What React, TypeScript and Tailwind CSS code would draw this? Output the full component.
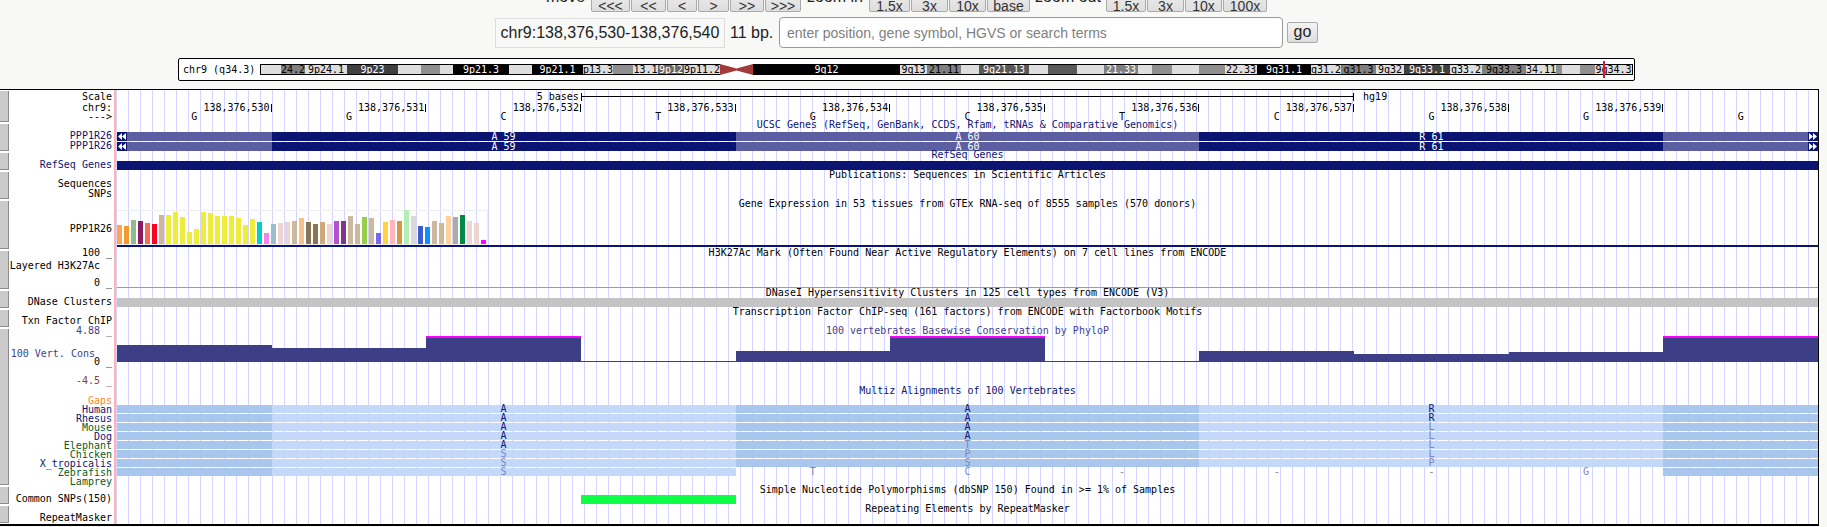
import type { ReactNode } from "react";

const navBtn = "h-[30px] border border-[#aaaaaa] rounded-[2px] bg-gradient-to-b from-[#f4f4f4] to-[#dedede] text-[14px] leading-[46px] text-[#333333] text-center overflow-hidden";

const moveBtns = [
  { t: "<<<", c: "w-[39px]" },
  { t: "<<", c: "w-[35px]" },
  { t: "<", c: "w-[30px]" },
  { t: ">", c: "w-[31px]" },
  { t: ">>", c: "w-[34px]" },
  { t: ">>>", c: "w-[36px]" },
];
const zoomInBtns = [
  { t: "1.5x", c: "w-[41px]" },
  { t: "3x", c: "w-[37px]" },
  { t: "10x", c: "w-[37px]" },
  { t: "base", c: "w-[43px]" },
];
const zoomOutBtns = [
  { t: "1.5x", c: "w-[40px]" },
  { t: "3x", c: "w-[37px]" },
  { t: "10x", c: "w-[37px]" },
  { t: "100x", c: "w-[44px]" },
];

const LIGHT = "bg-[#dedede] text-black";
const bands = [
  { w: 20, c: LIGHT, t: "" },
  { w: 24, c: "bg-[#808080] text-black", t: "24.2" },
  { w: 42, c: LIGHT, t: "9p24.1" },
  { w: 51, c: "bg-[#404040] text-white", t: "9p23" },
  { w: 23, c: LIGHT, t: "" },
  { w: 19, c: "bg-[#8f8f8f]", t: "" },
  { w: 13, c: LIGHT, t: "" },
  { w: 56, c: "bg-black text-white", t: "9p21.3" },
  { w: 23, c: LIGHT, t: "" },
  { w: 51, c: "bg-black text-white", t: "9p21.1" },
  { w: 30, c: LIGHT, t: "p13.3" },
  { w: 20, c: "bg-[#8f8f8f]", t: "" },
  { w: 25, c: LIGHT, t: "13.1" },
  { w: 26, c: "bg-[#666666] text-white", t: "9p12" },
  { w: 36, c: LIGHT, t: "9p11.2" },
  { w: 33, c: "cen", t: "" },
  { w: 147, c: "bg-black text-white", t: "9q12" },
  { w: 27, c: LIGHT, t: "9q13" },
  { w: 34, c: "bg-[#808080] text-black", t: "21.11" },
  { w: 18, c: LIGHT, t: "" },
  { w: 50, c: "bg-[#595959] text-white", t: "9q21.13" },
  { w: 19, c: LIGHT, t: "" },
  { w: 29, c: "bg-[#595959]", t: "" },
  { w: 27, c: LIGHT, t: "" },
  { w: 34, c: "bg-[#808080] text-white", t: "21.33" },
  { w: 14, c: LIGHT, t: "" },
  { w: 20, c: "bg-[#8f8f8f]", t: "" },
  { w: 27, c: LIGHT, t: "" },
  { w: 26, c: "bg-[#8f8f8f]", t: "" },
  { w: 32, c: LIGHT, t: "22.33" },
  { w: 54, c: "bg-black text-white", t: "9q31.1" },
  { w: 30, c: LIGHT, t: "q31.2" },
  { w: 35, c: "bg-[#808080] text-black", t: "q31.3" },
  { w: 28, c: LIGHT, t: "9q32" },
  { w: 46, c: "bg-[#404040] text-white", t: "9q33.1" },
  { w: 32, c: LIGHT, t: "q33.2" },
  { w: 44, c: "bg-[#808080] text-black", t: "9q33.3" },
  { w: 30, c: LIGHT, t: "34.11" },
  { w: 6, c: "bg-[#8f8f8f]", t: "" },
  { w: 18, c: LIGHT, t: "" },
  { w: 15, c: "bg-[#8f8f8f]", t: "" },
  { w: 37, c: LIGHT, t: "9q34.3" },
];

const gtex = [
  ["bg-[#ffa54f]", 19], ["bg-[#f39a2e]", 18], ["bg-[#8fbc8f]", 24], ["bg-[#8b1c62]", 23], ["bg-[#f56c57]", 21],
  ["bg-[#ff0020]", 20], ["bg-[#cdb79e]", 29], ["bg-[#f0ec3c]", 29], ["bg-[#f0ec3c]", 32], ["bg-[#f0ec3c]", 27],
  ["bg-[#f0ec3c]", 12], ["bg-[#f0ec3c]", 15], ["bg-[#f0ec3c]", 32], ["bg-[#f0ec3c]", 31], ["bg-[#f0ec3c]", 28],
  ["bg-[#f0ec3c]", 28], ["bg-[#f0ec3c]", 28], ["bg-[#f0ec3c]", 26], ["bg-[#f0ec3c]", 19], ["bg-[#f0ec3c]", 25],
  ["bg-[#00cdcd]", 22], ["bg-[#f584ea]", 11], ["bg-[#9ac0cd]", 20], ["bg-[#eed5d2]", 21], ["bg-[#eed5d2]", 22],
  ["bg-[#cdb79e]", 23], ["bg-[#f4c28f]", 26], ["bg-[#8b7355]", 22], ["bg-[#8b7355]", 20], ["bg-[#cdaa7d]", 22],
  ["bg-[#eed5d2]", 20], ["bg-[#b452cd]", 23], ["bg-[#7a378b]", 23], ["bg-[#cdb79e]", 28], ["bg-[#cdb79e]", 20],
  ["bg-[#96cd4a]", 27], ["bg-[#cdb79e]", 26], ["bg-[#7a67ee]", 11], ["bg-[#ffd53f]", 22], ["bg-[#ffb6c1]", 24],
  ["bg-[#d29c3c]", 23], ["bg-[#b4eeb4]", 34], ["bg-[#d9d9d9]", 28], ["bg-[#3a5fcd]", 18], ["bg-[#0f8fff]", 17],
  ["bg-[#cdb79e]", 23], ["bg-[#cdb79e]", 21], ["bg-[#fed09a]", 28], ["bg-[#ababab]", 27], ["bg-[#008b45]", 29],
  ["bg-[#eed5d2]", 23], ["bg-[#eed5d2]", 21], ["bg-[#ff00ff]", 4],
] as const;

const coords = ["530", "531", "532", "533", "534", "535", "536", "537", "538", "539"];
const dna = ["G", "G", "C", "T", "G", "C", "T", "C", "G", "G", "G"];

const cons = [
  "h-[17px]", "h-[14px]", "h-[26px] border-t-2", "h-px", "h-[11px]", "h-[26px] border-t-2",
  "h-px", "h-[11px]", "h-[8px]", "h-[10px]", "h-[26px] border-t-2",
];

const species = [
  { n: "Human", c: "text-[#0c1472]" },
  { n: "Rhesus", c: "text-[#0c1472]" },
  { n: "Mouse", c: "text-[#0b5a1e]" },
  { n: "Dog", c: "text-[#0c1472]" },
  { n: "Elephant", c: "text-[#0b5a1e]" },
  { n: "Chicken", c: "text-[#0b5a1e]" },
  { n: "X_tropicalis", c: "text-[#0c1472]" },
  { n: "Zebrafish", c: "text-[#0b5a1e]" },
  { n: "Lamprey", c: "text-[#0b5a1e]" },
];

// letters per alignment row, index 2, 5 and 8 are the codon centres
const NAVY = "text-[#0c1472]";
const GREY = "text-[#7d84b8]";
const aliRows = [
  [["A", NAVY], ["A", NAVY], ["R", NAVY]],
  [["A", NAVY], ["A", NAVY], ["R", NAVY]],
  [["A", NAVY], ["A", NAVY], ["L", GREY]],
  [["A", NAVY], ["A", NAVY], ["L", GREY]],
  [["A", NAVY], ["T", GREY], ["L", GREY]],
  [["S", GREY], ["P", GREY], ["L", GREY]],
  [["S", GREY], ["S", GREY], ["P", GREY]],
];
const DARK_COL = "bg-[#a9c7ec]";
const LIGHT_COL = "bg-[#c4d9fa]";
const aliCols = [DARK_COL, LIGHT_COL, LIGHT_COL, LIGHT_COL, DARK_COL, DARK_COL, DARK_COL, LIGHT_COL, LIGHT_COL, LIGHT_COL, DARK_COL];
const lastRow = ["", "", "S", "", "T", "C", "-", "-", "-", "G", ""];

function Row({ h, label, children }: { h: string; label: ReactNode; children: ReactNode }) {
  return (
    <div className={`flex ${h}`}>
      <div className="w-[9px] my-px bg-[#cbcbcb] border-r border-b border-[#8c8c8c] shrink-0" />
      <div className="w-[105px] shrink-0 flex flex-col items-end pr-[2px] whitespace-pre">{label}</div>
      <div className="w-[2px] bg-[#ffb4b4] shrink-0" />
      <div className="flex-1 pl-px bg-[repeating-linear-gradient(90deg,#d4d4ff_0,#d4d4ff_1px,transparent_1px,transparent_12px)]">
        {children}
      </div>
    </div>
  );
}

function Arrows({ right }: { right?: boolean }) {
  return (
    <span className="w-[10px] h-[9px] bg-[#0c1472] flex items-center justify-center">
      <svg width="8" height="7" viewBox="0 0 8 7" className={right ? "rotate-180" : ""}>
        <path d="M0 3.5 4 0v7zM4 3.5 8 0v7z" fill="#fff" />
      </svg>
    </span>
  );
}

function GeneBar({ arrows, label }: { arrows?: boolean; label: string[] }) {
  return (
    <div className="grid grid-cols-11 h-[9px] leading-[9px] text-white text-center">
      <div className="bg-[#5b5ea0] flex">{arrows && <Arrows />}</div>
      <div className="col-span-3 bg-[#0c1472]">{label[0]}</div>
      <div className="col-span-3 bg-[#5b5ea0]">{label[1]}</div>
      <div className="col-span-3 bg-[#0c1472]">{label[2]}</div>
      <div className="bg-[#5b5ea0] flex justify-end">{arrows && <Arrows right />}</div>
    </div>
  );
}

export default function App() {
  return (
    <div className="h-[527px] overflow-hidden bg-[#f8f8f6] font-['Liberation_Sans',sans-serif] text-[#222222]">
      <div className="h-[89px] w-[1813px] flex flex-col items-center">
        <div className="flex items-center mt-[-18px] h-[30px] text-[16px] leading-[30px] shrink-0">
          <span className="w-[45px] leading-[32px]">move</span>
          <div className="flex gap-px">
            {moveBtns.map((b) => (
              <div key={b.t} className={`${navBtn} ${b.c}`}>{b.t}</div>
            ))}
          </div>
          <span className="w-[68px] text-center leading-[32px]">zoom in</span>
          <div className="flex gap-px">
            {zoomInBtns.map((b) => (
              <div key={b.t} className={`${navBtn} ${b.c}`}>{b.t}</div>
            ))}
          </div>
          <span className="w-[76px] text-center leading-[32px]">zoom out</span>
          <div className="flex gap-px">
            {zoomOutBtns.map((b) => (
              <div key={b.t} className={`${navBtn} ${b.c}`}>{b.t}</div>
            ))}
          </div>
        </div>
        <div className="flex items-center mt-[5px] h-[31px] text-[16px]">
          <div className="w-[230px] h-[30px] border border-[#dddddd] text-center leading-[28px] whitespace-nowrap">
            chr9:138,376,530-138,376,540
          </div>
          <span className="ml-[5px] w-[45px] whitespace-nowrap">11 bp.</span>
          <input
            readOnly
            placeholder="enter position, gene symbol, HGVS or search terms"
            className="ml-[4px] w-[504px] h-[31px] bg-white border border-[#999999] rounded-[4px] px-[7px] text-[14px] placeholder:text-[#808080] outline-none"
          />
          <div className="ml-[4px] w-[31px] h-[21px] border border-[#aaaaaa] rounded-[2px] bg-gradient-to-b from-[#f4f4f4] to-[#dedede] text-center leading-[18px] text-[16px]">
            go
          </div>
        </div>
        <div className="mt-[10px] w-[1457px] h-[23px] shrink-0 bg-white border border-black rounded-[2px] flex items-center pl-[4px] font-['DejaVu_Sans_Mono',monospace] text-[10px] leading-[10px] text-black">
          <span className="w-[77px] whitespace-pre">chr9 (q34.3)</span>
          <div className="relative flex h-[11px] border border-black">
            {bands.map((b, i) =>
              b.c === "cen" ? (
                <svg key={i} width={b.w} height="11" viewBox="0 0 33 11" className="bg-white -my-px shrink-0 h-[11px]">
                  <path d="M0 0 16.5 4.5 33 0v11L16.5 6.500 0 11z" fill="#a33a3a" />
                </svg>
              ) : (
                <div
                  key={i}
                  className={`${b.c} h-[9px] leading-[9px] text-center overflow-hidden whitespace-nowrap shrink-0`}
                  style={{ width: b.w }}
                >
                  {b.t}
                </div>
              )
            )}
            <div className="absolute left-[1342px] top-[-4px] w-[2px] h-[17px] bg-[#e8112d]" />
          </div>
        </div>
      </div>

      <div className="w-[1819px] border-t border-r border-b-2 border-black bg-white font-['DejaVu_Sans_Mono',monospace] text-[10px] text-black">
        <Row
          h="h-[33px]"
          label={
            <div className="pt-[2px] flex flex-col items-end">
              <div className="h-[11px] leading-[10px]">Scale</div>
              <div className="h-[9px] leading-[10px]">chr9:</div>
              <div className="leading-[10px]">---&gt;</div>
            </div>
          }
        >
          <div className="pt-[3px]">
            <div className="grid grid-cols-11 h-[8px] leading-[7px]">
              <div className="col-span-3 text-right pr-[2px]">5 bases</div>
              <div className="col-span-5 border-x border-black h-[8px]">
                <div className="mt-[3px] h-px bg-black" />
              </div>
              <div className="col-span-3 pl-[9px]">hg19</div>
            </div>
            <div className="grid grid-cols-11 mt-[3px] h-[8px] leading-[8px]">
              {coords.map((c) => (
                <div key={c} className="border-r border-black text-right pr-px">
                  {"138,376," + c}
                </div>
              ))}
            </div>
            <div className="grid grid-cols-11 h-[10px] leading-[10px] text-center">
              {dna.map((d, i) => (
                <div key={i}>{d}</div>
              ))}
            </div>
          </div>
        </Row>

        <Row
          h="h-[29px]"
          label={
            <div className="pt-[8px] text-[#0c1472]">
              <div className="h-[10px] leading-[10px]">PPP1R26</div>
              <div className="h-[10px] leading-[10px]">PPP1R26</div>
            </div>
          }
        >
          <div className="h-[4px] leading-[4px] text-center text-[#0c1472]">
            UCSC Genes (RefSeq, GenBank, CCDS, Rfam, tRNAs &amp; Comparative Genomics)
          </div>
          <div className="mt-[5px]">
            <GeneBar arrows label={["A 59", "A 60", "R 61"]} />
          </div>
          <div className="mt-px">
            <GeneBar arrows label={["A 59", "A 60", "R 61"]} />
          </div>
        </Row>

        <Row h="h-[19px]" label={<div className="pt-[8px] leading-[10px] text-[#0c1472]">RefSeq Genes</div>}>
          <div className="h-[6px] leading-[6px] text-center text-[#0c1472]">RefSeq Genes</div>
          <div className="mt-[3px] h-[9px] bg-[#0c1472]" />
        </Row>

        <Row
          h="h-[29px]"
          label={
            <div className="pt-[8px] flex flex-col items-end">
              <div className="h-[10px] leading-[10px]">Sequences</div>
              <div className="h-[10px] leading-[10px]">SNPs</div>
            </div>
          }
        >
          <div className="h-[7px] leading-[7px] text-center">Publications: Sequences in Scientific Articles</div>
        </Row>

        <Row h="h-[50px]" label={<div className="pt-[24px] leading-[10px]">PPP1R26</div>}>
          <div className="h-[8px] leading-[8px] text-center">Gene Expression in 53 tissues from GTEx RNA-seq of 8555 samples (570 donors)</div>
          <div className="mt-[2px] w-[371px] h-[35px] border-t border-r border-b border-[#eeeeee] flex items-end gap-[2px]">
            {gtex.map(([c, v], i) => (
              <div key={i} className={`w-[5px] shrink-0 ${c}`} style={{ height: v }} />
            ))}
          </div>
          <div className="h-[2px] bg-[#0c1472]" />
        </Row>

        <Row
          h="h-[40px]"
          label={
            <div className="flex flex-col items-end">
              <div className="h-[6px] leading-[6px]">100 _</div>
              <div className="mt-[5px] h-[10px] leading-[10px] mr-[12px]">Layered H3K27Ac</div>
              <div className="mt-[7px] h-[10px] leading-[10px]">0 _</div>
            </div>
          }
        >
          <div className="h-[6px] leading-[6px] text-center">H3K27Ac Mark (Often Found Near Active Regulatory Elements) on 7 cell lines from ENCODE</div>
          <div className="mt-[31px] h-px bg-[#70b96f]" />
        </Row>

        <Row h="h-[19px]" label={<div className="pt-[7px] leading-[10px]">DNase Clusters</div>}>
          <div className="h-[5px] leading-[5px] text-center">DNaseI Hypersensitivity Clusters in 125 cell types from ENCODE (V3)</div>
          <div className="mt-[3px] h-[9px] bg-[#c4c4c4]" />
        </Row>

        <Row h="h-[19px]" label={<div className="pt-[7px] leading-[10px]">Txn Factor ChIP</div>}>
          <div className="h-[6px] leading-[6px] text-center">Transcription Factor ChIP-seq (161 factors) from ENCODE with Factorbook Motifs</div>
        </Row>

        <Row
          h="h-[158px]"
          label={
            <div className="flex flex-col items-end">
              <div className="h-[6px] leading-[6px] text-[#3f3f88]">4.88 _</div>
              <div className="mt-[16px] h-[8px] leading-[8px] mr-[17px] text-[#3f3f88]">100 Vert. Cons</div>
              <div className="h-[8px] leading-[8px]">0 _</div>
              <div className="mt-[10px] h-[10px] leading-[10px] text-[#8b3a3a]">-4.5 _</div>
              <div className="mt-[10px] h-[9px] leading-[9px] text-[#ff8a1e]">Gaps</div>
              {species.map((s) => (
                <div key={s.n} className={`h-[9px] leading-[9px] ${s.c}`}>{s.n}</div>
              ))}
            </div>
          }
        >
          <div className="h-[6px] leading-[6px] text-center text-[#3f3f88]">100 vertebrates Basewise Conservation by PhyloP</div>
          <div className="mt-[2px] h-[26px] grid grid-cols-11 items-end">
            {cons.map((c, i) => (
              <div key={i} className={`bg-[#3c3f85] border-[#ff00ff] ${c}`} />
            ))}
          </div>
          <div className="mt-[24px] h-[9px] leading-[9px] text-center text-[#0c1472]">Multiz Alignments of 100 Vertebrates</div>
          <div className="mt-[10px] flex flex-col gap-px">
            {aliRows.map((r, ri) => (
              <div key={ri} className="grid grid-cols-11 h-[8px] leading-[8px] text-center">
                {aliCols.map((c, ci) => {
                  const letter = ci === 2 ? r[0] : ci === 5 ? r[1] : ci === 8 ? r[2] : null;
                  return (
                    <div key={ci} className={`${c} ${letter ? letter[1] : ""}`}>
                      {letter ? letter[0] : ""}
                    </div>
                  );
                })}
              </div>
            ))}
            <div className="grid grid-cols-11 h-[8px] leading-[8px] text-center">
              {lastRow.map((l, i) => (
                <div key={i} className={`${i < 4 || i === 10 ? aliCols[i] : ""} ${GREY}`}>{l}</div>
              ))}
            </div>
          </div>
        </Row>

        <Row h="h-[19px]" label={<div className="pt-[8px] leading-[10px]">Common SNPs(150)</div>}>
          <div className="h-[8px] leading-[8px] text-center">Simple Nucleotide Polymorphisms (dbSNP 150) Found in &gt;= 1% of Samples</div>
          <div className="mt-px grid grid-cols-11 h-[9px]">
            <div className="col-start-4 bg-[#0dff46]" />
          </div>
        </Row>

        <Row h="h-[19px]" label={<div className="pt-[8px] leading-[10px]">RepeatMasker</div>}>
          <div className="h-[8px] leading-[8px] text-center">Repeating Elements by RepeatMasker</div>
        </Row>
      </div>
    </div>
  );
}
